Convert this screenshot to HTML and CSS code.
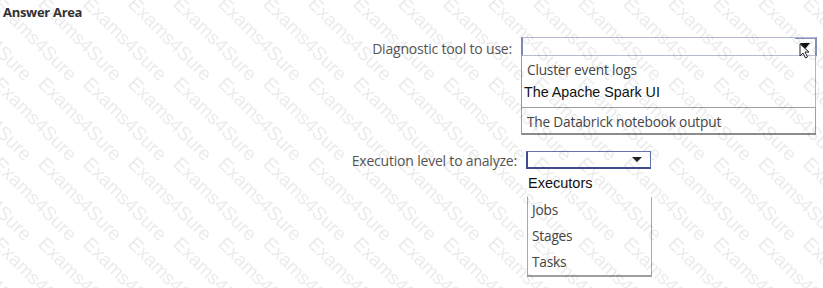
FILE: index.html
```html
<!DOCTYPE html>
<html>
<head>
<meta charset="utf-8">
<title>Answer Area</title>
<link rel="stylesheet" href="styles.css">
</head>
<body>
<div class="page">
  <div class="title">Answer Area</div>

  <div class="row row-1">
    <div class="label label-1">Diagnostic tool to use:</div>
    <div class="control control-1">
      <div class="select select-1">
        <span class="caret-btn caret-btn-1">
          <svg width="10" height="7" viewBox="0 0 10 7"><path d="M0 0H10L5 6Z" fill="#111"/></svg>
        </span>
      </div>
      <div class="list list-1">
        <div class="item item-first">Cluster event logs</div>
        <div class="item item-drag">The Apache Spark UI</div>
        <div class="item item-boxed">The Databrick notebook output</div>
      </div>
    </div>
  </div>

  <div class="row row-2">
    <div class="label label-2">Execution level to analyze:</div>
    <div class="control control-2">
      <div class="select select-2">
        <span class="caret-btn caret-btn-2">
          <svg width="10" height="6" viewBox="0 0 10 6"><path d="M0 0H10L5 5Z" fill="#222"/></svg>
        </span>
      </div>
      <div class="floating">Executors</div>
      <div class="list list-2">
        <div class="item item-2">Jobs</div>
        <div class="item item-2">Stages</div>
        <div class="item item-2">Tasks</div>
      </div>
    </div>
  </div>

  <svg class="cursor" width="11" height="16" viewBox="0 0 11 16">
    <path d="M1 1V13L4 10L6.5 15L8.5 14L6 9H10Z" fill="#fff" stroke="#222" stroke-width="1" stroke-linejoin="round"/>
  </svg>

  <svg class="watermark" width="823" height="288">
    <defs>
      <pattern id="wm" patternUnits="userSpaceOnUse" x="37" y="5" width="45" height="80">
        <g font-family="Liberation Sans, Arial, sans-serif" font-size="19" fill="#000" fill-opacity="0.08">
          <text x="-90" y="-80" transform="rotate(45 -90 -80)">Exams4Sure</text>
          <text x="-45" y="-80" transform="rotate(45 -45 -80)">Exams4Sure</text>
          <text x="0" y="-80" transform="rotate(45 0 -80)">Exams4Sure</text>
          <text x="45" y="-80" transform="rotate(45 45 -80)">Exams4Sure</text>
          <text x="-90" y="0" transform="rotate(45 -90 0)">Exams4Sure</text>
          <text x="-45" y="0" transform="rotate(45 -45 0)">Exams4Sure</text>
          <text x="0" y="0" transform="rotate(45 0 0)">Exams4Sure</text>
          <text x="45" y="0" transform="rotate(45 45 0)">Exams4Sure</text>
          <text x="-90" y="80" transform="rotate(45 -90 80)">Exams4Sure</text>
          <text x="-45" y="80" transform="rotate(45 -45 80)">Exams4Sure</text>
          <text x="0" y="80" transform="rotate(45 0 80)">Exams4Sure</text>
          <text x="45" y="80" transform="rotate(45 45 80)">Exams4Sure</text>
        </g>
      </pattern>
    </defs>
    <rect width="823" height="288" fill="url(#wm)"/>
  </svg>
</div>
</body>
</html>
```

FILE: styles.css
```css
* { box-sizing: border-box; }

html, body {
  margin: 0;
  padding: 0;
  background: #fff;
}

.page {
  position: relative;
  width: 823px;
  height: 288px;
  overflow: hidden;
  font-family: "Open Sans", "Noto Sans", sans-serif;
  color: #555;
}

.title {
  padding: 3px 0 0 3px;
  height: 19px;
  line-height: 18px;
  font-size: 13px;
  font-weight: 700;
  color: #333;
  letter-spacing: -0.3px;
}

.row {
  display: flex;
  align-items: flex-start;
  column-gap: 9px;
}

.row-1 { margin-top: 18px; }
.row-2 { margin-top: 16px; }

.label {
  text-align: right;
  font-size: 14px;
  letter-spacing: -0.2px;
  color: #555;
  white-space: nowrap;
}

.label-1 { width: 512px; line-height: 19px; padding-top: 2px; }
.label-2 { width: 517px; line-height: 18px; padding-top: 1px; }

.control {
  display: flex;
  flex-direction: column;
}

.control-1 { width: 296px; }
.control-2 { width: 125px; }

.select {
  position: relative;
  display: flex;
  justify-content: flex-end;
  align-items: center;
  background: #fff;
}

.select-1 {
  height: 19px;
  border: 1px solid #b4bbd2;
  border-left: 2px solid #7f89b2;
  border-right: 2px solid #8490bb;
}

.select-2 {
  height: 18px;
  border: 1px solid #6675b0;
  border-left: 2px solid #3e4d8e;
  border-bottom: 2px solid #3e4d8e;
}

.caret-btn {
  display: flex;
  align-items: center;
  justify-content: center;
}

.caret-btn-1 {
  width: 20px;
  height: 17px;
  border-top: 1px solid #8a93b8;
  margin-top: -1px;
}

.caret-btn-2 {
  width: 18px;
  height: 14px;
  margin-right: 4px;
}

.list {
  display: flex;
  flex-direction: column;
}

.list-1 {
  width: 295px;
  border-left: 1px solid #9a9a9a;
  border-right: 1px solid #b5b5b5;
}

.item {
  font-size: 13.7px;
  letter-spacing: -0.2px;
  color: #454545;
  white-space: nowrap;
}

.item-first {
  height: 26px;
  line-height: 27px;
  padding-left: 5px;
}

.item-drag {
  height: 25px;
  line-height: 21px;
  padding-left: 2px;
  font-family: "Liberation Sans", Arial, sans-serif;
  font-size: 14.3px;
  letter-spacing: 0;
  color: #111;
}

.item-boxed {
  height: 28px;
  line-height: 28px;
  padding-left: 5px;
  margin-left: -1px;
  margin-right: -1px;
  border: 1px solid #a0a0a0;
  border-bottom: 2px solid #8c8c8c;
}

.floating {
  height: 28px;
  line-height: 28px;
  padding-left: 2px;
  font-family: "Liberation Sans", Arial, sans-serif;
  font-size: 14.5px;
  color: #111;
}

.list-2 {
  width: 125px;
  margin-left: 1px;
  border: 1px solid #a8a8a8;
  border-top: none;
  border-bottom: 2px solid #a0a0a0;
}

.item-2 {
  height: 26px;
  line-height: 26px;
  padding-left: 4px;
}

.cursor {
  position: absolute;
  left: 799px;
  top: 43px;
}

.watermark {
  position: absolute;
  left: 0;
  top: 0;
  pointer-events: none;
}
```
